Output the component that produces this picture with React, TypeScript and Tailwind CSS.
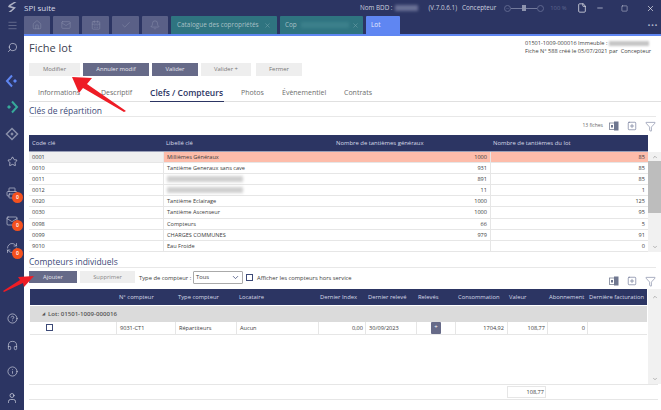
import {
  Home, Mail, CalendarDays, Check, Bell, Menu, Search, Star, Printer, CircleHelp, Headphones, Info, User,
  Filter, File, Minus, Square, X, ChevronDown, ChevronUp, SquarePlus, RefreshCw,
} from 'lucide-react';

const navy = 'bg-[#2c3563]';

const keys = [
  ['0001', 'Millièmes Généraux', '1000', '85'],
  ['0010', 'Tantième Generaux sans cave', '931', '85'],
  ['0011', '', '891', '85'],
  ['0012', '', '11', '1'],
  ['0020', 'Tantième Eclairage', '1000', '125'],
  ['0030', 'Tantième Ascenseur', '1000', '95'],
  ['0098', 'Compteurs', '66', '5'],
  ['0099', 'CHARGES COMMUNES', '979', '91'],
  ['9010', 'Eau Froide', '', '0'],
];

const keyCols = 'grid grid-cols-[134px_170px_157px_158px]';
const meterCols = 'grid grid-cols-[86px_59px_61px_82px_47px_51px_39px_52px_40px_40px_60px]';

function Badge({ className }: { className: string }) {
  return (
    <span className={`absolute flex h-[11px] w-[11px] items-center justify-center rounded-full bg-[#f4511e] text-[5px] font-semibold text-white ${className}`}>
      0
    </span>
  );
}

function ExportIcons() {
  return (
    <div className="flex items-center gap-[8px] text-[#5a6488]">
      <svg width="10" height="10" viewBox="0 0 10 10">
        <rect x="0.5" y="2" width="5" height="6.5" fill="none" stroke="#7a8296" strokeWidth="0.8" />
        <rect x="5" y="0.5" width="4.5" height="9" fill="#6f7790" />
        <rect x="2" y="4" width="2" height="2.5" fill="#6f7790" />
      </svg>
      <SquarePlus size={10} strokeWidth={1.4} />
      <Filter size={11} strokeWidth={1.1} />
    </div>
  );
}

function ScrollArrow({ up }: { up?: boolean }) {
  return up ? <ChevronUp size={6} className="text-[#777]" /> : <ChevronDown size={6} className="text-[#777]" />;
}

export default function App() {
  return (
    <div className={`relative flex h-[410px] w-[661px] overflow-hidden ${navy} font-['Open_Sans',sans-serif] text-[#3b3b3b]`}>
      {/* Sidebar */}
      <div className="flex h-full w-[24px] shrink-0 flex-col items-center text-[#d6d9e6]">
        <svg width="11" height="12" viewBox="0 0 11 12" className="mt-[1px]">
          <path d="M2 4 L7 1 L9.5 1 L3.5 5 L9 6.5 L4 11 L1.5 11 L6 7.5 L1 6 Z" fill="#aeb2c4" />
        </svg>
        <Menu size={11} strokeWidth={1.2} className="mt-[7px] text-[#8d93ad]" />
        <Search size={11} strokeWidth={1.3} className="mt-[11px] -scale-x-100 text-[#e4e6ef]" />
        <svg width="14" height="14" viewBox="0 0 14 14" className="mt-[21px]">
          <path d="M7 1.5 L2 7 L7 12.5" fill="none" stroke="#5f86f2" strokeWidth="2" />
          <rect x="8.6" y="5.6" width="2.8" height="2.8" transform="rotate(45 10 7)" fill="#5f86f2" />
        </svg>
        <svg width="14" height="14" viewBox="0 0 14 14" className="mt-[12px]">
          <path d="M7 1.5 L12 7 L7 12.5" fill="none" stroke="#37a99a" strokeWidth="2" />
          <rect x="2.6" y="5.6" width="2.8" height="2.8" transform="rotate(45 4 7)" fill="#37a99a" />
        </svg>
        <svg width="14" height="14" viewBox="0 0 14 14" className="mt-[13px]">
          <path d="M7 1.5 L12.5 7 L7 12.5 L1.5 7 Z" fill="none" stroke="#8a90aa" strokeWidth="1.5" />
          <rect x="5.8" y="5.8" width="2.4" height="2.4" transform="rotate(45 7 7)" fill="#8a90aa" />
        </svg>
        <Star size={11} strokeWidth={1.4} className="mt-[15px] text-[#e4e6ef]" />
        <div className="relative mt-[20px] h-[12px] w-[12px]">
          <Printer size={12} strokeWidth={1.2} />
          <Badge className="left-[6px] top-[5px]" />
        </div>
        <div className="relative mt-[16px] h-[12px] w-[12px]">
          <Mail size={12} strokeWidth={1.2} />
          <Badge className="left-[6px] top-[5px]" />
        </div>
        <div className="relative mt-[15px] h-[12px] w-[12px]">
          <RefreshCw size={12} strokeWidth={1.2} />
          <Badge className="left-[6px] top-[6px]" />
        </div>
        <CircleHelp size={11} strokeWidth={1.3} className="mt-[59px] text-[#e4e6ef]" />
        <Headphones size={11} strokeWidth={1.3} className="mt-[16px] text-[#e4e6ef]" />
        <Info size={11} strokeWidth={1.3} className="mt-[15px] text-[#e4e6ef]" />
        <User size={12} strokeWidth={1.3} className="mt-[15px] text-[#e4e6ef]" />
      </div>

      <div className="flex min-w-0 flex-1 flex-col">
        {/* Title bar */}
        <div className="flex h-[16px] items-center whitespace-nowrap text-[6.3px] text-[#cdd0df]">
          <span className="w-[336px] text-[8px] text-[#d8dbe8]">SPI suite</span>
          <span>Nom BDD :</span>
          <span className="ml-[2px] h-[6px] w-[23px] bg-[#6a7196] blur-[1.5px]" />
          <span className="ml-[11px]">(V.7.0.6.1)</span>
          <span className="ml-[5px]">Concepteur</span>
          <div className="ml-[8px] flex w-[73px] items-center text-[#5f678f]">
            <Minus size={7} className="rounded-full border border-[#5f678f]" />
            <span className="h-px w-[11px] bg-[#737a9c]" />
            <span className="h-[6px] w-[4px] bg-[#8d93ad]" />
            <span className="h-px w-[11px] bg-[#737a9c]" />
            <span className="h-[7px] w-[7px] rounded-full border border-[#5f678f]" />
            <span className="ml-[6px] text-[5.8px]">100 %</span>
          </div>
          <File size={10} strokeWidth={1.6} className="text-white" />
          <Minus size={8} className="ml-[9px] text-[#d8dbe8]" />
          <Square size={7} strokeWidth={1.6} className="ml-[17px] text-[#d8dbe8]" />
          <X size={9} strokeWidth={1.6} className="ml-[18px] text-white" />
        </div>

        {/* Tabs */}
        <div className="flex h-[18px] items-stretch gap-[3px] whitespace-nowrap text-[6.4px] text-[#a9c0c6]">
          <div className="flex w-[26px] items-center justify-center rounded-t-[1px] bg-[#5a6087] text-[#8b90ad]"><Home size={10} strokeWidth={1.2} /></div>
          <div className="flex w-[26px] items-center justify-center rounded-t-[1px] bg-[#5a6087] text-[#8b90ad]"><Mail size={10} strokeWidth={1.2} /></div>
          <div className="flex w-[27px] items-center justify-center rounded-t-[1px] bg-[#5a6087] text-[#8b90ad]"><CalendarDays size={10} strokeWidth={1.2} /></div>
          <div className="flex w-[27px] items-center justify-center rounded-t-[1px] bg-[#5a6087] text-[#8b90ad]"><Check size={10} strokeWidth={1.2} /></div>
          <div className="flex w-[26px] items-center justify-center rounded-t-[1px] bg-[#5a6087] text-[#8b90ad]"><Bell size={10} strokeWidth={1.2} /></div>
          <div className="flex w-[106px] items-center rounded-t-[1px] bg-[#2f7480] pl-[6px]">
            <span>Catalogue des copropriétés</span>
            <X size={7} className="ml-[5px] text-[#6fa0a8]" />
          </div>
          <div className="flex w-[83px] items-center rounded-t-[1px] bg-[#2f7480] pl-[5px]">
            <span>Cop</span>
            <span className="ml-[4px] h-[6px] w-[48px] bg-[#3c808b] blur-[1.5px]" />
            <X size={7} className="ml-[3px] text-[#6fa0a8]" />
          </div>
          <div className="flex w-[34px] items-center rounded-t-[1px] bg-[#5f86f2] pl-[5px] text-[#e6ecff]">Lot</div>
          <span className="ml-auto mr-[3px] self-center text-[8px] leading-none tracking-[0.5px] text-[#aab0c6]">•••</span>
        </div>
        <div className="h-[2px] bg-[#5f86f2]" />

        {/* Content */}
        <div className="flex-1 bg-white pl-[5px]">
          <div className="flex h-[27px] items-start justify-between">
            <span className="mt-[4px] text-[11px] leading-[16px] text-[#3c4150]">Fiche lot</span>
            <div className="mt-[3px] w-[136px] whitespace-nowrap text-[5.6px] leading-[8px] text-[#444]">
              <div className="flex items-center">
                01501-1009-000016 Immeuble :
                <span className="ml-[2px] h-[5px] w-[40px] bg-[#c6c6c6] blur-[1px]" />
              </div>
              <div>Fiche N° 588 créé le 05/07/2021 par &nbsp;Concepteur</div>
            </div>
          </div>

          <div className="flex h-[13px] text-[5.9px]">
            <div className="flex w-[51px] items-center justify-center bg-[#eeeeee] text-[#777]">Modifier</div>
            <div className="ml-[3px] flex w-[66px] items-center justify-center bg-[#666a88] text-[#e8e8ef]">Annuler modif</div>
            <div className="ml-[3px] flex w-[46px] items-center justify-center bg-[#666a88] text-[#e8e8ef]">Valider</div>
            <div className="ml-[3px] flex w-[50px] items-center justify-center bg-[#eeeeee] text-[#777]">Valider +</div>
            <div className="ml-[5px] flex w-[46px] items-center justify-center bg-[#eeeeee] text-[#777]">Fermer</div>
          </div>

          <div className="mt-[10px] flex h-[16px] items-start border-b border-[#e0e0e0] pl-[9px] text-[7px] leading-[14px] text-[#6d6d6d]">
            <span className="w-[63px]">Informations</span>
            <span className="w-[49px]">Descriptif</span>
            <span className="h-[16px] w-[74px] whitespace-nowrap border-b border-[#2c3563] text-[8.5px] font-semibold text-[#2c3563]">Clefs / Compteurs</span>
            <span className="ml-[17px] w-[41px]">Photos</span>
            <span className="w-[62px]">Évènementiel</span>
            <span>Contrats</span>
          </div>

          <div className="mr-[5px] h-[15px] border-b border-[#e8e8e8] text-[8.5px] leading-[18px] text-[#3d4a78]">Clés de répartition</div>

          <div className="flex h-[18px] items-center justify-end gap-[6px] pr-[5px]">
            <span className="text-[5px] text-[#666]">13 fiches</span>
            <ExportIcons />
          </div>

          {/* Key table */}
          <div className="flex">
            <div className="w-[619px]">
              <div className={`${keyCols} h-[17px] items-center border-b border-[#9aa0b8] ${navy} text-[5.9px] text-[#d8dbe8]`}>
                <span className="pl-[3px]">Code clé</span>
                <span className="pl-[3px]">Libellé clé</span>
                <span className="pl-[3px]">Nombre de tantièmes généraux</span>
                <span className="pl-[3px]">Nombre de tantièmes du lot</span>
              </div>
              {keys.map((row, i) => (
                <div key={row[0]} className={`${keyCols} h-[11.1px] border-b border-[#e6e6e6] text-[5.6px] leading-[10px]`}>
                  <span className={`pl-[3px] ${i === 0 ? 'bg-[#f0f0f0]' : ''}`}>{row[0]}</span>
                  <span className={`border-l border-[#e6e6e6] pl-[3px] ${i === 0 ? 'bg-[#fdbcaa]' : ''}`}>
                    {row[1] || <span className="mt-[2px] block h-[6px] w-[76px] bg-[#cfcfcf] blur-[1.5px]" />}
                  </span>
                  <span className={`pr-[3px] text-right ${i === 0 ? 'bg-[#fdbcaa]' : ''}`}>{row[2]}</span>
                  <span className={`border-l border-[#e6e6e6] pr-[3px] text-right ${i === 0 ? 'bg-[#fdbcaa]' : ''}`}>{row[3]}</span>
                </div>
              ))}
            </div>
            <div className="mt-[17px] flex w-[13px] flex-col items-center bg-[#f1f1f1] pt-[2px]">
              <ScrollArrow up />
              <div className="mt-[1px] h-[52px] w-full bg-[#bdbdbd]" />
              <div className="mt-auto mb-[2px]"><ScrollArrow /></div>
            </div>
          </div>

          <div className="mr-[5px] h-[16px] border-b border-[#e8e8e8] text-[8.5px] leading-[20px] text-[#3d4a78]">Compteurs individuels</div>

          {/* Meter toolbar */}
          <div className="mt-[3px] flex h-[18px] items-start pr-[5px] text-[5.8px]">
            <div className="flex h-[12px] w-[48px] items-center justify-center bg-[#666a88] text-[#e8e8ef]">Ajouter</div>
            <div className="ml-[3px] flex h-[12px] w-[55px] items-center justify-center bg-[#eeeeee] text-[#888]">Supprimer</div>
            <span className="ml-[4px] mt-[3px] w-[54px] whitespace-nowrap">Type de compteur :</span>
            <div className="flex h-[13px] w-[50px] items-center justify-between rounded-[1px] border border-[#aaa] px-[2px]">
              <span>Tous</span>
              <ChevronDown size={9} className="text-[#3d4a78]" />
            </div>
            <span className="ml-[3px] mt-[3px] h-[7px] w-[7px] border border-[#3d4a78]" />
            <span className="ml-[4px] mt-[3px]">Afficher les compteurs hors service</span>
            <div className="ml-auto mt-[5px]"><ExportIcons /></div>
          </div>

          {/* Meter table */}
          <div className="flex">
            <div className="ml-px w-[617px]">
              <div className={`${meterCols} h-[16px] items-center whitespace-nowrap ${navy} text-[5.8px] text-[#d8dbe8]`}>
                <span />
                <span className="pl-[3px]">N° compteur</span>
                <span className="pl-[3px]">Type compteur</span>
                <span className="pl-[3px]">Locataire</span>
                <span className="pl-[2px]">Dernier Index</span>
                <span className="pl-[3px]">Dernier relevé</span>
                <span className="pl-[2px]">Relevés</span>
                <span className="pl-[3px]">Consommation</span>
                <span className="pl-[2px]">Valeur</span>
                <span className="pl-[2px]">Abonnement</span>
                <span className="pl-[2px]">Dernière facturation</span>
              </div>
              <div className="mt-px flex h-[16px] items-center bg-[#dbdbdb] pl-[12px] text-[6.1px] font-semibold text-[#555]">
                <span className="mr-[3px] text-[4px]">◢</span>Lot: 01501-1009-000016
              </div>
              <div className={`${meterCols} h-[13px] items-center border-b border-[#e6e6e6] text-[5.6px]`}>
                <span className="flex pl-[16px]"><span className="h-[7px] w-[7px] border border-[#3d4a78]" /></span>
                <span className="border-l border-[#e6e6e6] pl-[3px] leading-[12px]">9031-CT1</span>
                <span className="border-l border-[#e6e6e6] pl-[3px] leading-[12px]">Répartiteurs</span>
                <span className="border-l border-[#e6e6e6] pl-[3px] leading-[12px]">Aucun</span>
                <span className="border-l border-[#e6e6e6] pr-[2px] text-right leading-[12px]">0,00</span>
                <span className="border-l border-[#e6e6e6] pl-[3px] leading-[12px]">30/09/2023</span>
                <span className="flex h-full items-center justify-center border-l border-[#e6e6e6]">
                  <span className="flex h-[12px] w-[10px] items-center justify-center rounded-[1px] bg-[#666a88] text-[6px] text-white">+</span>
                </span>
                <span className="border-l border-[#e6e6e6] pr-[3px] text-right leading-[12px]">1704,92</span>
                <span className="border-l border-[#e6e6e6] pr-[2px] text-right leading-[12px]">108,77</span>
                <span className="border-l border-[#e6e6e6] pr-[2px] text-right leading-[12px]">0</span>
                <span className="h-full border-l border-[#e6e6e6]" />
              </div>
              <div className="h-[49px]" />
            </div>
            <div className="ml-px flex w-[13px] flex-col items-center bg-[#f1f1f1] pt-[5px] pb-[2px]">
              <ScrollArrow up />
              <div className="mt-auto"><ScrollArrow /></div>
            </div>
          </div>

          {/* Totals */}
          <div className="mr-[3px] flex h-[16px] items-center border-y border-[#e6e6e6] pl-[478px]">
            <span className="flex h-[12px] w-[39px] items-center justify-end border border-[#e6e6e6] pr-[1px] text-[5.6px]">108,77</span>
          </div>
        </div>
      </div>

      {/* Red annotation arrows */}
      <svg className="pointer-events-none absolute left-0 top-0" width="661" height="410" viewBox="0 0 661 410">
        <polygon points="72,77 92,78 87,84 126,111 124,112 83,88 79,93" fill="#ee1c25" />
        <polygon points="34,276 24,287 23,283 4,292 3,291 20,280 18,277" fill="#ee1c25" />
      </svg>
    </div>
  );
}
